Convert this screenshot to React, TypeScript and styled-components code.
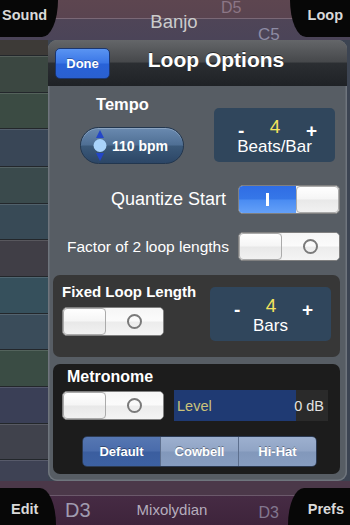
import React from 'react';
import styled, { createGlobalStyle } from 'styled-components';

const GlobalStyle = createGlobalStyle`
  html, body {
    margin: 0;
    padding: 0;
    background: #3c3440;
  }
  body {
    font-family: "Liberation Sans", Arial, Helvetica, sans-serif;
  }
  * {
    box-sizing: border-box;
  }
`;

const Screen = styled.div`
  width: 350px;
  height: 525px;
  display: flex;
  flex-direction: column;
  overflow: hidden;
  background: #3e3a48;
`;

// top & bottom strips

const TopBar = styled.div`
  height: 40px;
  flex-shrink: 0;
  display: flex;
  align-items: flex-start;
  background: linear-gradient(
    to bottom,
    #5d4650 0,
    #5a4450 18px,
    #7a6876 18px,
    #7a6876 19px,
    #4f4557 19px,
    #4b4458 40px
  );
`;

const BottomBar = styled.div`
  height: 44px;
  flex-shrink: 0;
  display: flex;
  align-items: flex-end;
  background: linear-gradient(
    to bottom,
    #4b3849 0,
    #4b3849 14px,
    #6b596b 14px,
    #6b596b 15px,
    #462b44 15px,
    #3e243b 44px
  );
`;

const Tab = styled.div<{ $side: 'left' | 'right'; $edge: 'top' | 'bottom'; $width: number; $inset: number }>`
  width: ${({ $width }) => $width}px;
  height: 37px;
  flex-shrink: 0;
  display: flex;
  align-items: center;
  justify-content: ${({ $side }) => ($side === 'left' ? 'flex-start' : 'flex-end')};
  padding-left: ${({ $side, $inset }) => ($side === 'left' ? $inset : 0)}px;
  padding-right: ${({ $side, $inset }) => ($side === 'right' ? $inset : 0)}px;
  padding-top: ${({ $edge }) => ($edge === 'bottom' ? 5 : 0)}px;
  padding-bottom: ${({ $edge }) => ($edge === 'top' ? 7 : 0)}px;
  background: #070707;
  color: #d9d9d9;
  font-size: 14.5px;
  font-weight: bold;
  line-height: 17px;
  ${({ $side, $edge }) =>
    `border-${$edge === 'top' ? 'bottom' : 'top'}-${$side === 'left' ? 'right' : 'left'}-radius: 16px 37px;`}
`;

const TopLanes = styled.div`
  flex: 1;
  height: 40px;
  display: grid;
  grid-template-columns: 1fr;
  grid-template-rows: 19px 21px;
`;

const NoteLabel = styled.div<{ $row: number; $indent: number; $drop: number; $size: number; $color: string }>`
  grid-row: ${({ $row }) => $row};
  grid-column: 1;
  padding-left: ${({ $indent }) => $indent}px;
  padding-top: ${({ $drop }) => $drop}px;
  font-size: ${({ $size }) => $size}px;
  line-height: 1;
  color: ${({ $color }) => $color};
  white-space: nowrap;
`;

const InstrumentName = styled.div`
  grid-row: 1 / 3;
  grid-column: 1;
  place-self: center;
  margin-top: 4px;
  font-size: 18.5px;
  line-height: 1;
  color: #cccccc;
`;

const FooterNotes = styled.div`
  flex: 1;
  height: 37px;
  display: flex;
  align-items: flex-start;
`;

const FooterText = styled.span<{ $gap: number; $drop: number; $size: number; $color: string }>`
  margin-left: ${({ $gap }) => $gap}px;
  padding-top: ${({ $drop }) => $drop}px;
  font-size: ${({ $size }) => $size}px;
  line-height: 1;
  color: ${({ $color }) => $color};
  white-space: nowrap;
`;

// middle: key strip + popover

const Workspace = styled.div`
  height: 441px;
  flex-shrink: 0;
  display: flex;
  background: #3c4452;
`;

const KeyStrip = styled.div`
  width: 48px;
  flex-shrink: 0;
  display: flex;
  flex-direction: column;
`;

const KeyRow = styled.div<{ $h: number; $color: string; $first?: boolean }>`
  height: ${({ $h }) => $h}px;
  flex-shrink: 0;
  background: ${({ $color }) => $color};
  border-top: ${({ $first }) => ($first ? 'none' : '1px solid #23272b')};
  box-shadow: ${({ $first }) => ($first ? 'none' : 'inset 0 1px 0 rgba(255,255,255,0.13)')};
`;

const Popover = styled.div`
  width: 299px;
  flex-shrink: 0;
  display: flex;
  flex-direction: column;
  overflow: hidden;
  border-radius: 9px;
  background: #575d64;
  box-shadow: inset 0 0 0 1.5px #6f757d;
`;

const PopoverHeader = styled.div`
  height: 46px;
  flex-shrink: 0;
  display: flex;
  align-items: center;
  padding: 0 25px 0 7px;
  background: linear-gradient(to bottom, #646669 0%, #46484b 48%, #2b2e32 50%, #1f2226 100%);
`;

const DoneButton = styled.button`
  width: 55px;
  height: 31px;
  padding: 0;
  border: 1px solid #1b3670;
  border-radius: 5px;
  background: linear-gradient(to bottom, #5a94f2 0%, #3a76e6 48%, #2862d8 52%, #2a60d0 100%);
  color: #fff;
  font-family: inherit;
  font-size: 13px;
  font-weight: bold;
  text-shadow: 0 -1px 0 rgba(0, 0, 0, 0.3);
`;

const PopoverTitle = styled.div`
  flex: 1;
  text-align: center;
  margin-bottom: 7px;
  color: #fff;
  font-size: 21px;
  font-weight: bold;
  line-height: 24px;
  text-shadow: 0 -1px 0 rgba(0, 0, 0, 0.5);
`;

const PopoverBody = styled.div`
  flex: 1;
  display: flex;
  flex-direction: column;
  padding: 9px 7px 7px 5px;
`;

const TempoRow = styled.div`
  display: flex;
  align-items: flex-start;
  gap: 30px;
  padding-left: 27px;
`;

const TempoColumn = styled.div`
  width: 104px;
  display: flex;
  flex-direction: column;
  align-items: center;
  gap: 13px;
`;

const Heading = styled.div<{ $size: number; $shift?: number }>`
  color: #fff;
  font-size: ${({ $size }) => $size}px;
  font-weight: bold;
  line-height: 18px;
  margin-left: ${({ $shift }) => $shift || 0}px;
  white-space: nowrap;
`;

const TempoHeading = styled(Heading)`
  line-height: 19px;
  margin-right: 19px;
`;

const TempoPill = styled.div`
  width: 104px;
  height: 37px;
  display: flex;
  align-items: center;
  gap: 5px;
  padding-left: 12px;
  border: 1px solid #22364e;
  border-radius: 19px;
  background: linear-gradient(to bottom, #6a8ab0 0%, #4f6f94 48%, #3b5979 52%, #2c4666 100%);
  box-shadow: inset 0 1px 0 rgba(255, 255, 255, 0.22);
  color: #fff;
  font-size: 14px;
  font-weight: bold;
`;

const Stepper = styled.div<{ $top: number }>`
  width: 121px;
  height: 54px;
  flex-shrink: 0;
  margin-top: ${({ $top }) => $top}px;
  display: flex;
  flex-direction: column;
  padding-top: 6px;
  border-radius: 5px;
  background: #30465c;
`;

const StepperControls = styled.div`
  height: 24px;
  display: flex;
  align-items: center;
  justify-content: space-between;
  padding: 0 18px 0 24px;
`;

const StepSign = styled.span`
  margin-top: 10px;
  color: #fff;
  font-size: 19px;
  font-weight: bold;
  line-height: 10px;
`;

const StepValue = styled.span`
  color: #f4e35c;
  font-size: 19px;
  line-height: 1;
`;

const StepCaption = styled.div`
  text-align: center;
  color: #fff;
  font-size: 17px;
  line-height: 18px;
`;

const SettingRow = styled.div<{ $top: number; $gap: number }>`
  margin-top: ${({ $top }) => $top}px;
  display: flex;
  align-items: center;
  justify-content: flex-end;
  gap: ${({ $gap }) => $gap}px;
`;

const SettingLabel = styled.span<{ $size: number }>`
  color: #fff;
  font-size: ${({ $size }) => $size}px;
  white-space: nowrap;
`;

const SwitchFrame = styled.div`
  width: 102px;
  height: 29px;
  flex-shrink: 0;
  display: flex;
  overflow: hidden;
  border: 1px solid #808080;
  border-radius: 5px;
  background: #eeeeee;
`;

const SwitchTrack = styled.div<{ $on: boolean }>`
  flex: 1;
  display: flex;
  align-items: center;
  justify-content: center;
  background: ${({ $on }) =>
    $on
      ? 'linear-gradient(to bottom, #2f6de4 0%, #3677e8 48%, #4a8cf2 52%, #64a0f8 100%)'
      : 'linear-gradient(to bottom, #f6f6f6 0%, #fbfbfb 48%, #ececec 52%, #f4f4f4 100%)'};
`;

const SwitchKnob = styled.div`
  width: 43px;
  flex-shrink: 0;
  border-radius: 4px;
  border: 1px solid #ababab;
  background: linear-gradient(to bottom, #ffffff 0%, #f5f5f5 48%, #e8e8e8 52%, #f1f1f1 100%);
`;

const OnMark = styled.span`
  width: 3px;
  height: 13px;
  background: #ffffff;
`;

const OffMark = styled.span`
  width: 15px;
  height: 15px;
  border: 2px solid #7a7a7a;
  border-radius: 50%;
`;

const Panel = styled.div<{ $top: number; $height: number; $tone: string }>`
  margin-top: ${({ $top }) => $top}px;
  height: ${({ $height }) => $height}px;
  border-radius: 7px;
  background: ${({ $tone }) => $tone};
`;

const LoopPanel = styled(Panel)`
  display: flex;
  align-items: flex-start;
  justify-content: space-between;
  padding: 8px 9px 0;
`;

const PanelColumn = styled.div<{ $gap: number }>`
  display: flex;
  flex-direction: column;
  gap: ${({ $gap }) => $gap}px;
`;

const MetronomePanel = styled(Panel)`
  display: flex;
  flex-direction: column;
  padding: 4px 9px 0;
`;

const MetronomeControls = styled.div`
  margin-top: 4px;
  display: flex;
  align-items: center;
  gap: 10px;
`;

const LevelSlider = styled.div<{ $level: number }>`
  width: 154px;
  height: 31px;
  display: flex;
  align-items: center;
  justify-content: space-between;
  padding: 0 4px 0 3px;
  font-size: 14.5px;
  background: linear-gradient(
    to right,
    #1f3a73 ${({ $level }) => $level}%,
    #2a2a2a ${({ $level }) => $level}%
  );
`;

const LevelName = styled.span`
  color: #cbc37a;
`;

const LevelValue = styled.span`
  color: #e2e2e2;
`;

const Segmented = styled.div`
  width: 235px;
  height: 31px;
  margin: 15px 0 0 20px;
  display: flex;
  overflow: hidden;
  border: 1px solid #2c3a52;
  border-radius: 5px;
`;

const Segment = styled.div<{ $active: boolean }>`
  flex: 1;
  display: flex;
  align-items: center;
  justify-content: center;
  color: #fff;
  font-size: 13px;
  font-weight: bold;
  text-shadow: 0 -1px 0 rgba(0, 0, 0, 0.35);
  background: ${({ $active }) =>
    $active
      ? 'linear-gradient(to bottom, #5677b2 0%, #4a6cab 48%, #3b5e9f 52%, #3d61a2 100%)'
      : 'linear-gradient(to bottom, #9db0cf 0%, #90a4c5 48%, #8298bb 52%, #879dc0 100%)'};

  & + & {
    border-left: 1px solid #5d6f8e;
  }
`;

const keyRows = [
  { h: 15, color: '#3d3a37' },
  { h: 37, color: '#3b4741' },
  { h: 36, color: '#3b4b43' },
  { h: 38, color: '#394656' },
  { h: 37, color: '#3a4a4c' },
  { h: 36, color: '#384a56' },
  { h: 37, color: '#403e46' },
  { h: 37, color: '#36505c' },
  { h: 36, color: '#3a4c5a' },
  { h: 37, color: '#3a4c44' },
  { h: 37, color: '#3a3f56' },
  { h: 36, color: '#40424c' },
  { h: 22, color: '#3e4254' },
];

const TempoIcon = () => (
  <svg width="14" height="31" viewBox="0 0 14 31">
    <path d="M7 0 L11 8 L3 8 Z" fill="#2346c8" />
    <path d="M3 23 L11 23 L7 31 Z" fill="#2346c8" />
    <circle cx="7" cy="15.5" r="6.5" fill="#a9d3fb" />
  </svg>
);

const Switch: React.FC<{ on: boolean }> = ({ on }) => (
  <SwitchFrame>
    {on ? (
      <>
        <SwitchTrack $on>
          <OnMark />
        </SwitchTrack>
        <SwitchKnob />
      </>
    ) : (
      <>
        <SwitchKnob />
        <SwitchTrack $on={false}>
          <OffMark />
        </SwitchTrack>
      </>
    )}
  </SwitchFrame>
);

const StepperBox: React.FC<{ value: number; caption: string; top: number }> = ({ value, caption, top }) => (
  <Stepper $top={top}>
    <StepperControls>
      <StepSign>-</StepSign>
      <StepValue>{value}</StepValue>
      <StepSign>+</StepSign>
    </StepperControls>
    <StepCaption>{caption}</StepCaption>
  </Stepper>
);

const sounds = ['Default', 'Cowbell', 'Hi-Hat'];

export default function App() {
  const level = 79.4;

  return (
    <>
      <GlobalStyle />
      <Screen>
        <TopBar>
          <Tab $side="left" $edge="top" $width={58} $inset={2}>Sound</Tab>
          <TopLanes>
            <NoteLabel $row={1} $indent={163} $drop={0} $size={16} $color="#8c7686">D5</NoteLabel>
            <NoteLabel $row={2} $indent={200} $drop={7} $size={17} $color="#8e8ca4">C5</NoteLabel>
            <InstrumentName>Banjo</InstrumentName>
          </TopLanes>
          <Tab $side="right" $edge="top" $width={60} $inset={7}>Loop</Tab>
        </TopBar>

        <Workspace>
          <KeyStrip>
            {keyRows.map((row, i) => (
              <KeyRow key={i} $h={row.h} $color={row.color} $first={i === 0} />
            ))}
          </KeyStrip>

          <Popover>
            <PopoverHeader>
              <DoneButton>Done</DoneButton>
              <PopoverTitle>Loop Options</PopoverTitle>
            </PopoverHeader>

            <PopoverBody>
              <TempoRow>
                <TempoColumn>
                  <TempoHeading $size={16.5}>Tempo</TempoHeading>
                  <TempoPill>
                    <TempoIcon />
                    110 bpm
                  </TempoPill>
                </TempoColumn>
                <StepperBox value={4} caption="Beats/Bar" top={13} />
              </TempoRow>

              <SettingRow $top={21} $gap={12}>
                <SettingLabel $size={18}>Quantize Start</SettingLabel>
                <Switch on />
              </SettingRow>

              <SettingRow $top={18} $gap={9}>
                <SettingLabel $size={15.5}>Factor of 2 loop lengths</SettingLabel>
                <Switch on={false} />
              </SettingRow>

              <LoopPanel $top={14} $height={82} $tone="#373737">
                <PanelColumn $gap={6}>
                  <Heading $size={15}>Fixed Loop Length</Heading>
                  <Switch on={false} />
                </PanelColumn>
                <StepperBox value={4} caption="Bars" top={4} />
              </LoopPanel>

              <MetronomePanel $top={7} $height={110} $tone="#1c1c1c">
                <Heading $size={16} $shift={5}>Metronome</Heading>
                <MetronomeControls>
                  <Switch on={false} />
                  <LevelSlider $level={level}>
                    <LevelName>Level</LevelName>
                    <LevelValue>0 dB</LevelValue>
                  </LevelSlider>
                </MetronomeControls>
                <Segmented>
                  {sounds.map((s, i) => (
                    <Segment key={s} $active={i === 0}>{s}</Segment>
                  ))}
                </Segmented>
              </MetronomePanel>
            </PopoverBody>
          </Popover>
        </Workspace>

        <BottomBar>
          <Tab $side="left" $edge="bottom" $width={56} $inset={11}>Edit</Tab>
          <FooterNotes>
            <FooterText $gap={9} $drop={12} $size={20} $color="#a09cb0">D3</FooterText>
            <FooterText $gap={46} $drop={14} $size={15} $color="#b5adbd">Mixolydian</FooterText>
            <FooterText $gap={51} $drop={17} $size={16} $color="#82778f">D3</FooterText>
          </FooterNotes>
          <Tab $side="right" $edge="bottom" $width={62} $inset={6}>Prefs</Tab>
        </BottomBar>
      </Screen>
    </>
  );
}
